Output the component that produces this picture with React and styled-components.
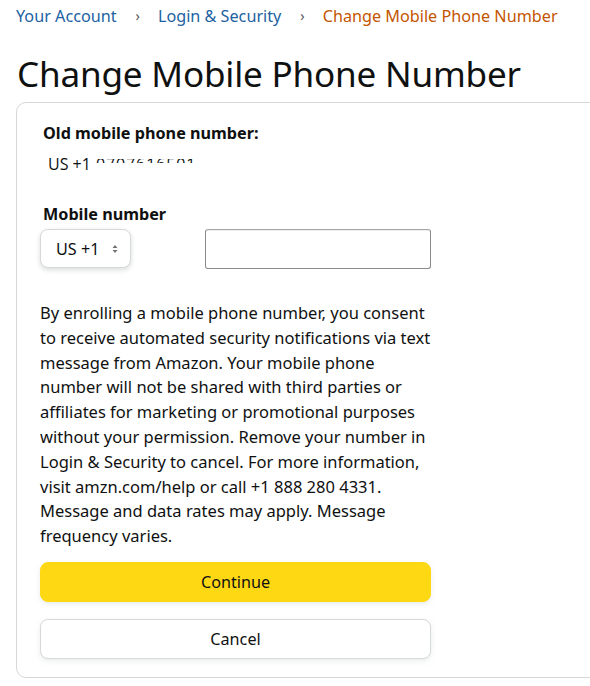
import React from "react";
import styled, { createGlobalStyle } from "styled-components";

const Global = createGlobalStyle`
  html, body { margin: 0; padding: 0; background: #fff; }
  body { font-family: "Noto Sans", "Open Sans", Arial, sans-serif; color: #0f1111; }
  * { box-sizing: border-box; }
`;

const Page = styled.div`
  width: 590px;
  height: 686px;
  overflow: hidden;
  padding: 0 0 0 16px;
`;

const Crumbs = styled.nav`
  display: flex;
  align-items: center;
  height: 32px;
  font-size: 16.2px;
  line-height: 20px;
  white-space: nowrap;
`;

const Crumb = styled.span`
  color: ${(p) => (p.$current ? "#c45500" : "#2162a1")};
`;

const Sep = styled.span`
  color: #555;
  font-size: 14px;
  margin: 0 18px 0 19px;
`;

const Title = styled.h1`
  margin: 19px 0 0 1px;
  font-size: 35.1px;
  font-weight: 400;
  line-height: 44px;
  letter-spacing: -0.2px;
  white-space: nowrap;
`;

const Card = styled.div`
  margin-top: 7px;
  width: 600px;
  border: 1px solid #d5d9d9;
  border-radius: 10px;
  padding: 19px 0 18px 23px;
`;

const Inner = styled.div`
  width: 391px;
  display: flex;
  flex-direction: column;
`;

const Label = styled.div`
  font-weight: 700;
  font-size: 16.2px;
  line-height: 22px;
  padding-left: 3px;
`;

const OldNumber = styled.div`
  display: flex;
  align-items: flex-start;
  margin: 9px 0 0 8px;
  font-family: "Open Sans", "Noto Sans", sans-serif;
  font-size: 16px;
  line-height: 22px;
  height: 22px;
`;

const Masked = styled.span`
  display: inline-block;
  margin-left: 5px;
  margin-top: 6px;
  height: 4px;
  overflow: hidden;
  line-height: 22px;
  & > span { display: block; margin-top: -6px; letter-spacing: 0.9px; }
`;

const FieldLabel = styled(Label)`
  margin-top: 28px;
`;

const FieldRow = styled.div`
  display: flex;
  align-items: flex-start;
  margin-top: 4px;
  gap: 74px;
`;

const Select = styled.div`
  width: 91px;
  height: 39px;
  border: 1px solid #d5d9d9;
  border-radius: 8px;
  background: #fff;
  box-shadow: 0 2px 5px rgba(15, 17, 17, 0.15);
  display: flex;
  align-items: center;
  padding: 0 0 0 15px;
  gap: 13px;
  font-size: 16.2px;
`;

const Arrows = styled.svg`
  width: 6px;
  height: 10px;
`;

const Input = styled.div`
  width: 226px;
  height: 40px;
  border: 1px solid #888c8c;
  border-top-color: #a6a6a6;
  border-radius: 3px;
  box-shadow: 0 1px 0 rgba(0, 0, 0, 0.07) inset;
`;

const Notice = styled.p`
  margin: 32px 0 0;
  font-size: 16.5px;
  line-height: 24.8px;
  width: 394px;
`;

const Button = styled.button`
  width: 391px;
  height: 40px;
  border-radius: 8px;
  font-family: inherit;
  font-size: 16.2px;
  color: #0f1111;
  cursor: pointer;
  background: ${(p) => (p.$primary ? "#ffd814" : "#fff")};
  border: 1px solid ${(p) => (p.$primary ? "#ffd814" : "#d5d9d9")};
  box-shadow: 0 2px 5px rgba(213, 217, 217, 0.5);
  margin-top: ${(p) => p.$mt}px;
`;

export default function App() {
  return (
    <>
      <Global />
      <Page>
        <Crumbs>
          <Crumb>Your Account</Crumb>
          <Sep>›</Sep>
          <Crumb>Login &amp; Security</Crumb>
          <Sep>›</Sep>
          <Crumb $current>Change Mobile Phone Number</Crumb>
        </Crumbs>
        <Title>Change Mobile Phone Number</Title>
        <Card>
          <Inner>
            <Label>Old mobile phone number:</Label>
            <OldNumber>
              US +1
              <Masked>
                <span>0707616501</span>
              </Masked>
            </OldNumber>
            <FieldLabel>Mobile number</FieldLabel>
            <FieldRow>
              <Select>
                US +1
                <Arrows viewBox="0 0 6 10">
                  <path d="M0.5 4 L3 1 L5.5 4 Z M0.5 6 L3 9 L5.5 6 Z" fill="#6f7373" />
                </Arrows>
              </Select>
              <Input />
            </FieldRow>
            <Notice>
              By enrolling a mobile phone number, you consent to receive automated
              security notifications via text message from Amazon. Your mobile phone
              number will not be shared with third parties or affiliates for marketing
              or promotional purposes without your permission. Remove your number in
              Login &amp; Security to cancel. For more information, visit
              amzn.com/help or call +1 888 280 4331. Message and data rates may
              apply. Message frequency varies.
            </Notice>
            <Button $primary $mt={13}>Continue</Button>
            <Button $mt={17}>Cancel</Button>
          </Inner>
        </Card>
      </Page>
    </>
  );
}
